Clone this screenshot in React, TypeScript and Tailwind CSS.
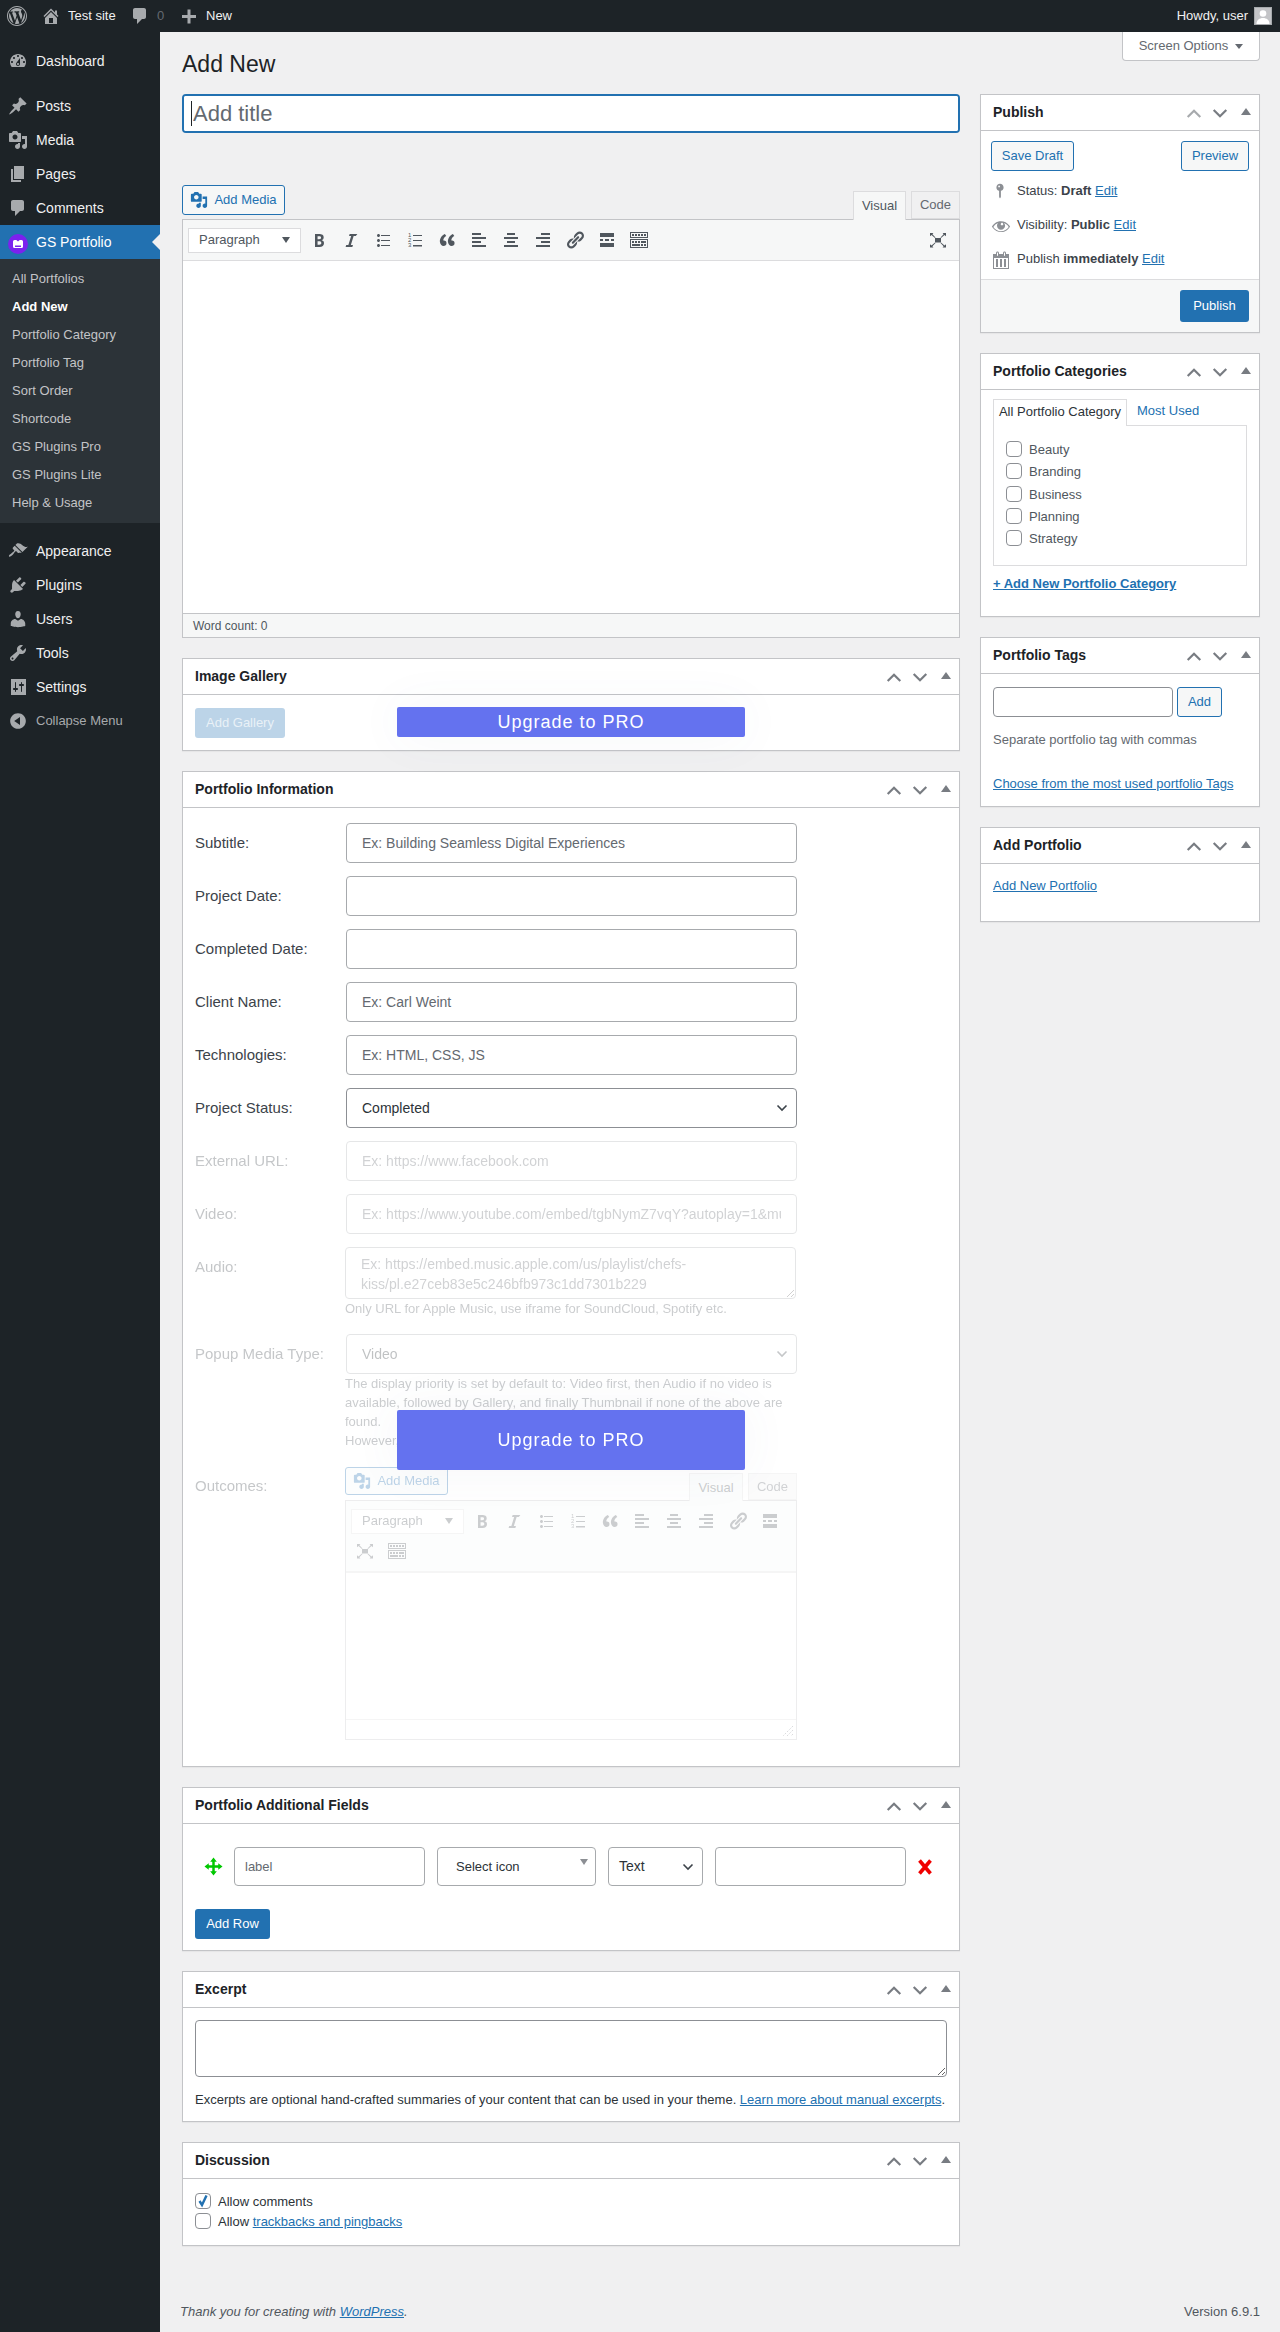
import React from "react";

const P: Record<string, string> = {
  wp: "M20 10c0-5.52-4.48-10-10-10S0 4.48 0 10s4.48 10 10 10 10-4.48 10-10zM10 1.01c4.96 0 8.99 4.03 8.99 8.99s-4.03 8.99-8.99 8.99S1.01 14.96 1.01 10 5.04 1.01 10 1.01zM8.01 14.82L4.96 6.61c.49-.03 1.05-.08 1.05-.08.43-.05.38-1.01-.06-.99 0 0-1.29.1-2.13.1-.15 0-.33 0-.52-.01 1.44-2.17 3.9-3.6 6.7-3.6 2.09 0 3.99.79 5.41 2.09-.6-.08-1.45.35-1.45 1.42 0 .66.38 1.22.79 1.88.31.54.5 1.22.5 2.21 0 1.34-1.27 4.48-1.27 4.48l-2.71-7.5c.48-.03.75-.16.75-.16.43-.05.38-1.1-.05-1.08 0 0-1.3.11-2.14.11-.78 0-2.11-.11-2.11-.11-.43-.02-.48 1.06-.05 1.08l.84.08 1.12 3.04zm6.02 2.15L16.64 10s.67-1.69.39-3.81c.63 1.14.94 2.42.94 3.81 0 2.96-1.56 5.58-3.94 6.97zM2.68 6.77L6.5 17.25c-2.67-1.3-4.47-4.08-4.47-7.25 0-1.16.2-2.23.65-3.23zm7.45 4.53l2.29 6.25c-.75.27-1.57.42-2.42.42-.72 0-1.41-.11-2.06-.3z",
  home: "M16 8.5l1.53 1.53-1.06 1.06L10 4.62l-6.47 6.47-1.06-1.06L10 2.5l4 4v-2h2v4zm-6-2.46l6 5.99V18H4v-5.97zM12 17v-5H8v5h4z",
  plus: "M17 9v3h-5.5v5.5h-3V12H3V9h5.5V3.5h3V9z",
  comment: "M5 2h9c1.1 0 2 .9 2 2v7c0 1.1-.9 2-2 2h-2l-5 5v-5H5c-1.1 0-2-.9-2-2V4c0-1.1.9-2 2-2z",
  dashboard: "M3.76 16h12.48c1.1-1.37 1.76-3.11 1.76-5 0-4.42-3.58-8-8-8s-8 3.58-8 8c0 1.89.66 3.63 1.76 5zM10 4c.55 0 1 .45 1 1s-.45 1-1 1-1-.45-1-1 .45-1 1-1zM6 6c.55 0 1 .45 1 1s-.45 1-1 1-1-.45-1-1 .45-1 1-1zm8 0c.55 0 1 .45 1 1s-.45 1-1 1-1-.45-1-1 .45-1 1-1zm-5.37 5.55L12 7v6c0 1.1-.9 2-2 2s-2-.9-2-2c0-.57.24-1.08.63-1.45zM4 10c.55 0 1 .45 1 1s-.45 1-1 1-1-.45-1-1 .45-1 1-1zm12 0c.55 0 1 .45 1 1s-.45 1-1 1-1-.45-1-1 .45-1 1-1zm-5 3c0-.55-.45-1-1-1s-1 .45-1 1 .45 1 1 1 1-.45 1-1z",
  post: "M10.44 3.02l1.82-1.82 6.36 6.35-1.83 1.82c-1.05-.68-2.48-.57-3.41.36l-.75.75c-.92.93-1.04 2.35-.35 3.41l-1.83 1.82-2.41-2.41-2.8 2.79c-.42.42-3.38 2.71-3.8 2.29s1.86-3.39 2.28-3.81l2.79-2.79L4.1 9.36l1.83-1.82c1.05.69 2.48.57 3.4-.36l.75-.75c.93-.92 1.05-2.35.36-3.41z",
  media: "M13 11V4c0-.55-.45-1-1-1h-1.67L9 1H5L3.67 3H2c-.55 0-1 .45-1 1v7c0 .55.45 1 1 1h10c.55 0 1-.45 1-1zM7 4.5c1.38 0 2.5 1.12 2.5 2.5S8.38 9.5 7 9.5 4.5 8.38 4.5 7 5.62 4.5 7 4.5zM14 6h5v10.5c0 1.38-1.12 2.5-2.5 2.5S14 17.88 14 16.5s1.12-2.5 2.5-2.5c.17 0 .34.02.5.05V9h-3V6zm-4 8.05V13h2v3.5c0 1.38-1.12 2.5-2.5 2.5S7 17.88 7 16.5 8.12 14 9.5 14c.17 0 .34.02.5.05z",
  page: "M6 15V2h10v13H6zm-1 1h8v2H3V5h2v11z",
  appearance: "M14.48 11.06L7.41 3.99l1.5-1.5c.5-.56 2.3-.47 3.51.32 1.21.8 1.43 1.28 2.91 2.1 1.18.64 2.45 1.26 4.45.85zm-.71.71L6.7 4.7 4.93 6.47c-.39.39-.39 1.02 0 1.41l1.06 1.06c.39.39.39 1.03 0 1.42-.6.6-1.43 1.11-2.21 1.69-.35.26-.7.53-1.01.84C1.43 13.23.42 14.84 1.09 15.5c.67.67 2.27-.34 3.61-1.68.31-.31.58-.66.85-1.02.57-.78 1.08-1.61 1.69-2.21.39-.39 1.02-.39 1.41 0l1.06 1.06c.39.39 1.02.39 1.41 0z",
  plugins: "M13.11 4.36L9.87 7.6 8 5.73l3.24-3.24c.35-.34 1.05-.2 1.56.32.52.51.66 1.21.31 1.55zm-8 1.77l.91-1.12 9.01 9.01-1.19.84c-.71.71-2.63 1.16-3.82 1.16H6.14L4.9 17.26c-.59.59-1.54.59-2.12 0-.59-.58-.59-1.53 0-2.12l1.24-1.24v-3.88c0-1.13.4-3.19 1.09-3.89zm7.26 3.97l3.24-3.24c.34-.35 1.04-.21 1.55.31.52.51.66 1.21.31 1.55l-3.24 3.25z",
  users: "M10 9.25c-2.27 0-2.73-3.44-2.73-3.44C7 4.02 7.82 2 9.97 2c2.16 0 2.98 2.02 2.71 3.81 0 0-.41 3.44-2.68 3.44zm0 2.57L12.72 10c2.39 0 4.52 2.33 4.52 4.53v2.49s-3.65 1.13-7.24 1.13c-3.65 0-7.24-1.13-7.24-1.13v-2.49c0-2.25 1.94-4.48 4.47-4.48z",
  tools: "M16.68 9.77c-1.34 1.34-3.3 1.67-4.95.99l-5.41 6.52c-.99.99-2.59.99-3.58 0s-.99-2.59 0-3.57l6.52-5.42c-.68-1.65-.35-3.61.99-4.95 1.28-1.28 3.12-1.62 4.72-1.06l-2.89 2.89 2.82 2.82 2.86-2.87c.53 1.58.18 3.39-1.08 4.65zM3.81 16.21c.4.39 1.04.39 1.43 0 .4-.4.4-1.04 0-1.43-.39-.4-1.03-.4-1.43 0-.39.39-.39 1.03 0 1.43z",
  settings: "M18 18V2H3v16h15zM8 11h1c.55 0 1 .45 1 1s-.45 1-1 1H8v1.5c0 .28-.22.5-.5.5s-.5-.22-.5-.5V13H6c-.55 0-1-.45-1-1s.45-1 1-1h1V5.5c0-.28.22-.5.5-.5s.5.22.5.5V11zm5-2h-1c-.55 0-1-.45-1-1s.45-1 1-1h1V5.5c0-.28.22-.5.5-.5s.5.22.5.5V7h1c.55 0 1 .45 1 1s-.45 1-1 1h-1v5.5c0 .28-.22.5-.5.5s-.5-.22-.5-.5V9z",
  collapse: "M10 2.16c4.33 0 7.84 3.51 7.84 7.84s-3.51 7.84-7.84 7.84S2.16 14.33 2.16 10 5.71 2.16 10 2.16zm2 11.72V6.12L6.18 9.97z",
  bold: "M6 4v13h4.54c1.37 0 2.46-.33 3.26-1 .8-.66 1.2-1.58 1.2-2.77 0-.84-.17-1.51-.51-2.01s-.9-.85-1.67-1.03v-.09c.57-.1 1.02-.4 1.36-.9s.51-1.13.51-1.91c0-1.14-.39-1.98-1.17-2.5C12.75 4.26 11.5 4 9.78 4H6zm2.57 5.15V6.26h1.36c.73 0 1.27.11 1.61.32.34.22.51.58.51 1.07 0 .54-.16.92-.47 1.15s-.82.35-1.51.35h-1.5zm0 2.19h1.6c1.44 0 2.16.53 2.16 1.61 0 .6-.17 1.05-.51 1.34s-.86.43-1.57.43H8.57v-3.38z",
  italic: "M14.78 6h-2.13l-2.8 9h2.12l-.62 2H4.6l.62-2h2.14l2.8-9H8.03l.62-2h7.75z",
  ul: "M5.5 7C4.67 7 4 6.33 4 5.5 4 4.68 4.67 4 5.5 4 6.32 4 7 4.68 7 5.5 7 6.33 6.32 7 5.5 7zM8 5h9v1H8V5zm-2.5 7c-.83 0-1.5-.67-1.5-1.5C4 9.68 4.67 9 5.5 9c.82 0 1.5.68 1.5 1.5 0 .83-.68 1.5-1.5 1.5zM8 10h9v1H8v-1zm-2.5 7c-.83 0-1.5-.67-1.5-1.5 0-.82.67-1.5 1.5-1.5.82 0 1.5.68 1.5 1.5 0 .83-.68 1.5-1.5 1.5zM8 15h9v1H8v-1z",
  quote: "M9.49 13.22c0-.74-.2-1.38-.61-1.9-.62-.78-1.83-.88-2.53-.72-.29-1.65 1.11-3.75 2.92-4.65L7.88 4c-2.73 1.3-5.42 4.28-4.96 8.05C3.21 14.43 4.59 16 6.54 16c.85 0 1.56-.25 2.12-.75s.83-1.18.83-2.03zm8.05 0c0-.74-.2-1.38-.61-1.9-.63-.78-1.83-.88-2.53-.72-.29-1.65 1.11-3.75 2.92-4.65L15.93 4c-2.73 1.3-5.42 4.28-4.96 8.05.29 2.38 1.66 3.95 3.61 3.95.85 0 1.56-.25 2.12-.75s.84-1.18.84-2.03z",
  alignL: "M12 5V3H3v2h9zm5 4V7H3v2h14zm-5 4v-2H3v2h9zm5 4v-2H3v2h14z",
  alignC: "M14 5V3H6v2h8zm3 4V7H3v2h14zm-3 4v-2H6v2h8zm3 4v-2H3v2h14z",
  alignR: "M17 5V3H8v2h9zm0 4V7H3v2h14zm0 4v-2H8v2h9zm0 4v-2H3v2h14z",
  link: "M17.74 2.76c1.68 1.69 1.68 4.41 0 6.1l-1.53 1.52c-1.12 1.12-2.7 1.47-4.14 1.09l2.62-2.61.76-.77.76-.76c.84-.84.84-2.2 0-3.04-.84-.85-2.2-.85-3.04 0l-.77.76-3.38 3.38c-.37-1.44-.02-3.02 1.1-4.14l1.52-1.53c1.69-1.68 4.42-1.68 6.1 0zM8.59 13.43l5.34-5.34c.42-.42.42-1.1 0-1.52-.44-.43-1.13-.39-1.53 0l-5.33 5.34c-.42.42-.42 1.1 0 1.52.44.43 1.13.39 1.52 0zm-.76 2.29l4.14-4.15c.38 1.44.03 3.02-1.09 4.14l-1.52 1.53c-1.69 1.68-4.41 1.68-6.1 0-1.68-1.68-1.68-4.42 0-6.1l1.53-1.52c1.12-1.12 2.7-1.47 4.14-1.1l-4.14 4.15c-.85.84-.85 2.2 0 3.05.84.84 2.2.84 3.04 0z",
  more: "M17 7V3H3v4h14zM6 11V9H3v2h3zm6 0V9H8v2h4zm5 0V9h-3v2h3zm0 6v-4H3v4h14z",
  kitchen: "M19 2v6H1V2h18zm-1 5V3H2v4h16zM5 4v2H3V4h2zm3 0v2H6V4h2zm3 0v2H9V4h2zm3 0v2h-2V4h2zm3 0v2h-2V4h2zm2 5v9H1V9h18zm-1 8v-7H2v7h16zM5 11v2H3v-2h2zm3 0v2H6v-2h2zm3 0v2H9v-2h2zm6 0v2h-5v-2h5zm-6 3v2H3v-2h8zm3 0v2h-2v-2h2zm3 0v2h-2v-2h2z",
  pin: "M14 6c0 1.86-1.28 3.41-3 3.86V16c0 1-1 2-1 2s-1-1-1-2V9.86c-1.72-.45-3-2-3-3.86 0-2.21 1.79-4 4-4s4 1.79 4 4zM8 5c0 .55.45 1 1 1s1-.45 1-1-.45-1-1-1-1 .45-1 1z",
  eye: "M18.3 9.5C15 4.9 8.5 3.8 3.9 7.2c-1.2.9-2.2 2.1-3 3.4.2.4.5.8.8 1.2 3.3 4.6 9.6 5.6 14.2 2.4.9-.7 1.7-1.4 2.4-2.4.3-.4.5-.8.8-1.2-.2-.5-.5-.8-.8-1.1zm-8.2-2.3c.5-.5 1.3-.5 1.8 0s.5 1.3 0 1.8-1.3.5-1.8 0c-.5-.4-.5-1.3 0-1.8zm-.1 8c-3.1 0-6-1.6-7.7-4.2C3.5 9 5.1 7.8 7 7c-.7.8-1 1.7-1 2.7 0 2.2 1.7 4.1 4 4.1 2.2 0 4.1-1.7 4.1-4 0-1-.4-2-1.1-2.7 1.9.8 3.5 2 4.7 3.9-1.7 2.6-4.6 4.2-7.7 4.2z",
  calendar: "M15 4h3v15H2V4h3V3c0-.41.15-.76.44-1.06.29-.29.65-.44 1.06-.44s.77.15 1.06.44c.29.3.44.65.44 1.06v1h4V3c0-.41.15-.76.44-1.06.29-.29.65-.44 1.06-.44s.77.15 1.06.44c.29.3.44.65.44 1.06v1zM6 3v2.5c0 .14.05.26.15.36.09.09.21.14.35.14s.26-.05.35-.14c.1-.1.15-.22.15-.36V3c0-.14-.05-.26-.15-.35-.09-.1-.21-.15-.35-.15s-.26.05-.35.15c-.1.09-.15.21-.15.35zm7 0v2.5c0 .14.05.26.14.36.1.09.22.14.36.14s.26-.05.36-.14c.09-.1.14-.22.14-.36V3c0-.14-.05-.26-.14-.35-.1-.1-.22-.15-.36-.15s-.26.05-.36.15c-.09.09-.14.21-.14.35zm4 15V8H3v10h14zM5 9h2v8H5V9zm4 0h2v8H9V9zm4 0h2v8h-2V9z",
};

function Dash({ n, className = "" }: { n: string; className?: string }) {
  return (
    <svg viewBox="0 0 20 20" fill="currentColor" fillRule="evenodd" className={className}>
      <path d={P[n]} />
    </svg>
  );
}

function OlIcon({ className = "" }: { className?: string }) {
  return (
    <svg viewBox="0 0 20 20" fill="currentColor" className={className}>
      <text x="3" y="7" fontSize="6" fontFamily="Liberation Sans, sans-serif">1</text>
      <text x="3" y="12.2" fontSize="6" fontFamily="Liberation Sans, sans-serif">2</text>
      <text x="3" y="17.4" fontSize="6" fontFamily="Liberation Sans, sans-serif">3</text>
      <path d="M8 5h9v1H8zM8 10h9v1H8zM8 15h9v1.400H8z" />
    </svg>
  );
}

function FullIcon({ className = "" }: { className?: string }) {
  return (
    <svg viewBox="0 0 20 20" fill="currentColor" className={className}>
      <path d="M7 8h6v4.500H7z" />
      <path d="M2 3h3.400L4.400 4.200 7.500 7.500 7 8 3.500 5 2 6.300zM18 3h-3.400l1 1.200-3.100 3.300.5.500 3.500-3L18 6.300zM2 17.500h3.400l-1-1.200 3.100-3.300-.5-.5-3.500 3L2 14.200zM18 17.500h-3.400l1-1.200-3.100-3.300.5-.5 3.500 3 1.500-1.300z" />
    </svg>
  );
}

function Chevron({ up, faded }: { up?: boolean; faded?: boolean }) {
  return (
    <svg viewBox="0 0 20 20" className={"h-5 w-5 " + (faded ? "text-[#a7aaad]" : "text-[#787c82]")} fill="none" stroke="currentColor" strokeWidth="2.200">
      {up ? <path d="M3.700 14 L10 7.700 L16.300 14" /> : <path d="M3.700 7 L10 13.300 L16.300 7" />}
    </svg>
  );
}

function Box({ title, h, children, faded }: { title: string; h: string; children?: React.ReactNode; faded?: boolean }) {
  return (
    <section className={"relative flex flex-col border border-[#c3c4c7] bg-white shadow-[0_1px_1px_rgba(0,0,0,0.04)] " + h}>
      <div className="flex h-[36px] shrink-0 items-center justify-between border-b border-[#c3c4c7] pl-3">
        <h2 className="pb-px text-[14px] font-bold leading-none text-[#1d2327]">{title}</h2>
        <div className="flex items-center">
          <span className="flex w-[26px] justify-center"><Chevron up faded={faded} /></span>
          <span className="flex w-[26px] justify-center"><Chevron /></span>
          <span className="flex w-[26px] justify-center pb-[3px]">
            <span className="h-0 w-0 border-x-[5px] border-b-[7px] border-x-transparent border-b-[#787c82]" />
          </span>
        </div>
      </div>
      {children}
    </section>
  );
}

function WpBtn({ children, className = "" }: { children: React.ReactNode; className?: string }) {
  return (
    <button className={"flex items-center justify-center rounded-[3px] border border-[#2271b1] bg-[#f6f7f7] text-[13px] text-[#2271b1] " + className}>
      {children}
    </button>
  );
}

function Primary({ children, className = "" }: { children: React.ReactNode; className?: string }) {
  return (
    <button className={"flex items-center justify-center rounded-[3px] text-[13px] " + className}>{children}</button>
  );
}

function Upgrade({ className }: { className: string }) {
  return (
    <div className={"absolute z-20 flex w-[348px] items-center justify-center rounded-[2px] bg-[#6472ef] text-[18px] tracking-[1px] text-white shadow-[0_0_50px_rgba(90,100,130,0.06)] " + className}>
      Upgrade to PRO
    </div>
  );
}

const TOOLS = ["bold", "italic", "ul", "ol", "quote", "alignL", "alignC", "alignR", "link", "more"];

function ToolIcon({ n }: { n: string }) {
  return (
    <span className="flex h-[28px] w-[32px] shrink-0 items-center justify-center text-[#50575e]">
      {n === "ol" ? <OlIcon className="h-5 w-5" /> : n === "full" ? <FullIcon className="h-5 w-5" /> : <Dash n={n} className="h-5 w-5" />}
    </span>
  );
}

function ParaSelect() {
  return (
    <div className="mr-[2px] flex h-[25px] w-[113px] shrink-0 items-center justify-between border border-[#dcdcde] bg-white pl-[10px] pr-[10px] text-[13px] text-[#50575e]">
      <span>Paragraph</span>
      <span className="h-0 w-0 border-x-[4px] border-t-[6px] border-x-transparent border-t-[#50575e]" />
    </div>
  );
}

function Field({ label, children }: { label: string; children: React.ReactNode }) {
  return (
    <div className="flex items-start">
      <label className="w-[151px] shrink-0 text-[15px] leading-[40px] text-[#3c434a]">{label}</label>
      {children}
    </div>
  );
}

const fieldCls = "h-[40px] w-[451px] rounded-[4px] border border-[#a7aaad] bg-white px-[15px] text-[14px] text-[#2c3338] outline-none placeholder:text-[#646970]";

function Input({ ph }: { ph?: string }) {
  return <input className={fieldCls} placeholder={ph} />;
}

function SelectBox({ value, tone }: { value: string; tone: string }) {
  return (
    <div className={"flex h-[40px] w-[451px] items-center justify-between rounded-[4px] border bg-white pl-[15px] pr-[8px] text-[14px] text-[#2c3338] " + tone}>
      <span>{value}</span>
      <ChevronSmall />
    </div>
  );
}

function ChevronSmall() {
  return (
    <svg viewBox="0 0 12 8" className="h-[8px] w-[12px] text-[#3c434a]" fill="none" stroke="currentColor" strokeWidth="1.600">
      <path d="M1.500 1.500 L6 6 L10.500 1.500" />
    </svg>
  );
}

function Check({ checked }: { checked?: boolean }) {
  return (
    <span className="relative block h-4 w-4 shrink-0 rounded-[4px] border border-[#8c8f94] bg-white">
      {checked && (
        <svg viewBox="0 0 16 16" className="absolute -left-px -top-px h-4 w-4" fill="none" stroke="#2271b1" strokeWidth="2.400">
          <path d="M4.500 8 L7 12 L11.500 2.500" />
        </svg>
      )}
    </span>
  );
}

function Sidebar() {
  const top = [
    ["dashboard", "Dashboard", "mb-[11px]"],
    ["post", "Posts", ""],
    ["media", "Media", ""],
    ["page", "Pages", ""],
    ["comment", "Comments", ""],
  ];
  const subs = ["All Portfolios", "Add New", "Portfolio Category", "Portfolio Tag", "Sort Order", "Shortcode", "GS Plugins Pro", "GS Plugins Lite", "Help & Usage"];
  const bottom = [
    ["appearance", "Appearance"],
    ["plugins", "Plugins"],
    ["users", "Users"],
    ["tools", "Tools"],
    ["settings", "Settings"],
  ];
  return (
    <nav className="w-[160px] shrink-0 bg-[#1d2327] pt-[12px] text-[14px] text-[#f0f0f1]">
      {top.map(([i, t, c]) => (
        <div key={t} className={"flex h-[34px] items-center " + c}>
          <span className="flex w-[36px] justify-center text-[#a7aaad]"><Dash n={i} className="h-5 w-5" /></span>
          <span>{t}</span>
        </div>
      ))}
      <div className="relative flex h-[34px] items-center bg-[#2271b1] text-white">
        <span className="flex w-[36px] justify-center">
          <svg viewBox="0 0 20 20" className="mt-[4px] h-5 w-5">
            <circle cx="10" cy="10" r="10" fill="#7b22ee" />
            <path d="M5 7.500a1.500 1.500 0 0 1 1.500-1.500h1.800l1.700 1.500L11.700 6h1.800A1.500 1.500 0 0 1 15 7.500v5a1.500 1.500 0 0 1-1.500 1.500h-7A1.500 1.500 0 0 1 5 12.500z" fill="#fff" />
            <path d="M7 11.500h6V13H7z" fill="#7b22ee" />
          </svg>
        </span>
        <span>GS Portfolio</span>
        <span className="absolute right-0 top-[9px] h-0 w-0 border-y-[8px] border-r-[8px] border-y-transparent border-r-[#f0f0f1]" />
      </div>
      <div className="mb-[11px] h-[264px] bg-[#2c3338] pt-[5.500px] text-[13px] text-[#c3c4c7]">
        {subs.map((s) => (
          <div key={s} className={"flex h-[28px] items-center pl-3 " + (s === "Add New" ? "font-bold text-white" : "")}>{s}</div>
        ))}
      </div>
      {bottom.map(([i, t]) => (
        <div key={t} className="flex h-[34px] items-center">
          <span className="flex w-[36px] justify-center text-[#a7aaad]"><Dash n={i} className="h-5 w-5" /></span>
          <span>{t}</span>
        </div>
      ))}
      <div className="flex h-[34px] items-center text-[13px] text-[#a7aaad]">
        <span className="flex w-[36px] justify-center"><Dash n="collapse" className="h-5 w-5" /></span>
        <span>Collapse Menu</span>
      </div>
    </nav>
  );
}

function AdminBar() {
  return (
    <header className="flex h-[32px] shrink-0 items-center justify-between bg-[#1d2327] text-[13px] text-[#f0f0f1]">
      <div className="flex items-center">
        <span className="flex w-[34px] justify-center text-[#a7aaad]"><Dash n="wp" className="h-5 w-5" /></span>
        <span className="flex w-[34px] justify-center text-[#a7aaad]"><Dash n="home" className="h-5 w-5" /></span>
        <span className="w-[58px]">Test site</span>
        <span className="flex w-[28px] justify-center text-[#a7aaad]"><Dash n="comment" className="h-5 w-5" /></span>
        <span className="ml-[3px] w-[15px] text-[#646970]">0</span>
        <span className="flex w-[34px] justify-center text-[#a7aaad]"><Dash n="plus" className="h-5 w-5" /></span>
        <span>New</span>
      </div>
      <div className="flex items-center pr-2">
        <span>Howdy, user</span>
        <span className="ml-[6px] flex h-[18px] w-[18px] items-end justify-center overflow-hidden border border-[#a7aaad] bg-[#c3c4c7]">
          <svg viewBox="0 0 16 16" className="h-4 w-4" fill="#fff"><circle cx="8" cy="5.500" r="3.300" /><path d="M1.500 16c0-4 3-6 6.500-6s6.500 2 6.500 6z" /></svg>
        </span>
      </div>
    </header>
  );
}

function TitleRow() {
  return (
    <div className="relative h-[39px] rounded-[4px] border-2 border-[#2271b1] bg-white">
      <input className="h-full w-full rounded-[2px] bg-white pl-[9px] text-[22px] text-[#2c3338] outline-none placeholder:text-[#646970]" placeholder="Add title" />
      <span className="absolute left-[7px] top-[5px] h-[25px] w-px bg-[#1d2327]" />
    </div>
  );
}

function ClassicEditor() {
  return (
    <div className="mt-[52px]">
      <div className="flex h-[34px] items-start justify-between">
        <WpBtn className="h-[30px] w-[103px] gap-[6px]"><Dash n="media" className="h-[18px] w-[18px]" />Add Media</WpBtn>
        <div className="flex h-full items-end gap-[5px]">
          <span className="relative z-10 -mb-px flex h-[29px] w-[53px] items-center justify-center border border-b-0 border-[#dcdcde] bg-[#f6f7f7] text-[13px] text-[#50575e]">Visual</span>
          <span className="flex h-[28px] w-[49px] items-center justify-center border border-[#dcdcde] bg-[#f0f0f1] text-[13px] text-[#646970]">Code</span>
        </div>
      </div>
      <div className="flex h-[419px] flex-col border border-[#c3c4c7] bg-white">
        <div className="flex h-[41px] shrink-0 items-center justify-between border-b border-[#dcdcde] bg-[#f6f7f7] pl-[5px] pr-[5px]">
          <div className="flex items-center">
            <ParaSelect />
            {TOOLS.map((t) => <ToolIcon key={t} n={t} />)}
            <ToolIcon n="kitchen" />
          </div>
          <ToolIcon n="full" />
        </div>
        <div className="flex-1" />
        <div className="flex h-[24px] shrink-0 items-center border-t border-[#c3c4c7] bg-[#f6f7f7] pl-[10px] text-[12px] text-[#50575e]">Word count: 0</div>
      </div>
    </div>
  );
}

function PortfolioInfo() {
  return (
    <Box title="Portfolio Information" h="h-[996px]">
      <div className="flex flex-col gap-[13px] pl-3 pt-[15px]">
        <Field label="Subtitle:"><Input ph="Ex: Building Seamless Digital Experiences" /></Field>
        <Field label="Project Date:"><Input /></Field>
        <Field label="Completed Date:"><Input /></Field>
        <Field label="Client Name:"><Input ph="Ex: Carl Weint" /></Field>
        <Field label="Technologies:"><Input ph="Ex: HTML, CSS, JS" /></Field>
        <Field label="Project Status:"><SelectBox value="Completed" tone="border-[#8c8f94]" /></Field>
      </div>
      <div className="mt-[13px] flex flex-col pl-3 opacity-30">
        <Field label="External URL:"><Input ph="Ex: https://www.facebook.com" /></Field>
        <div className="h-[13px]" />
        <Field label="Video:"><Input ph="Ex: https://www.youtube.com/embed/tgbNymZ7vqY?autoplay=1&mute=1&rel=0" /></Field>
        <div className="h-[13px]" />
        <Field label="Audio:">
          <div className="-ml-px w-[451px]">
            <textarea className="block h-[52px] w-full rounded-[4px] border border-[#a7aaad] bg-white px-[15px] pt-[6px] text-[14px] leading-[20px] outline-none placeholder:text-[#646970]" placeholder="Ex: https://embed.music.apple.com/us/playlist/chefs-kiss/pl.e27ceb83e5c246bfb973c1dd7301b229" />
            <p className="text-[13px] leading-[20px] text-[#50575e]">Only URL for Apple Music, use iframe for SoundCloud, Spotify etc.</p>
          </div>
        </Field>
        <div className="h-[15px]" />
        <Field label="Popup Media Type:">
          <div className="w-[451px]">
            <SelectBox value="Video" tone="border-[#a7aaad]" />
            <p className="-ml-px text-[13px] leading-[19px] text-[#50575e]">
              The display priority is set by default to: Video first, then Audio if no video is available, followed by Gallery, and finally Thumbnail if none of the above are found.<br />However, you can choose the type here.
            </p>
          </div>
        </Field>
        <div className="h-[17px]" />
        <div className="flex items-start">
          <label className="w-[150px] shrink-0 pt-[9px] text-[15px] leading-[20px] text-[#3c434a]">Outcomes:</label>
          <div className="w-[452px]">
            <div className="flex h-[33px] items-start justify-between">
              <WpBtn className="h-[28px] w-[103px] gap-[6px]"><Dash n="media" className="h-[18px] w-[18px]" />Add Media</WpBtn>
              <div className="flex h-full items-end gap-[5px]">
                <span className="relative z-10 -mb-px flex h-[28px] w-[54px] items-center justify-center border border-b-0 border-[#dcdcde] bg-[#f6f7f7] text-[13px] text-[#50575e]">Visual</span>
                <span className="flex h-[27px] w-[49px] items-center justify-center border border-[#dcdcde] bg-[#f0f0f1] text-[13px] text-[#646970]">Code</span>
              </div>
            </div>
            <div className="flex h-[240px] flex-col border border-[#c3c4c7]">
              <div className="h-[72px] shrink-0 border-b-2 border-[#dcdcde] bg-[#f6f7f7] pl-[5px] pt-[5px]">
                <div className="flex h-[30px] items-center">
                  <ParaSelect />
                  {TOOLS.map((t) => <ToolIcon key={t} n={t} />)}
                </div>
                <div className="-ml-[2px] flex h-[30px] items-center">
                  <ToolIcon n="full" />
                  <ToolIcon n="kitchen" />
                </div>
              </div>
              <div className="flex-1 bg-white" />
              <div className="relative h-[20px] shrink-0 border-t border-[#dcdcde] bg-white">
                <svg viewBox="0 0 12 12" className="absolute bottom-[2px] right-[2px] h-3 w-3 text-[#50575e]" fill="none" stroke="currentColor" strokeDasharray="1 1.500">
                  <path d="M11 1 L1 11 M11 5 L5 11 M11 9 L9 11" />
                </svg>
              </div>
            </div>
          </div>
        </div>
      </div>
      <Upgrade className="left-[214px] top-[638px] h-[60px]" />
    </Box>
  );
}

function AdditionalFields() {
  const cls = "h-[39px] rounded-[4px] border border-[#a7aaad] bg-white text-[13px] text-[#2c3338] outline-none placeholder:text-[#646970]";
  return (
    <Box title="Portfolio Additional Fields" h="h-[164px]">
      <div className="pl-3 pt-[23px]">
        <div className="flex items-center">
          <svg viewBox="0 0 20 20" className="ml-[9px] mr-[11px] h-[19px] w-[19px] text-[#00c800]" fill="currentColor">
            <path d="M10 0.500 L13.500 5 H11.300 V8.700 H15 V6.500 L19.500 10 L15 13.500 V11.300 H11.300 V15 H13.500 L10 19.500 L6.500 15 H8.700 V11.300 H5 V13.500 L0.500 10 L5 6.500 V8.700 H8.700 V5 H6.500 Z" />
          </svg>
          <input className={cls + " w-[191px] pl-[10px]"} placeholder="label" />
          <div className={cls + " relative ml-[12px] flex w-[159px] items-center pl-[18px]"}>
            Select icon
            <span className="absolute right-[7px] top-[11px] h-0 w-0 border-x-[4px] border-t-[6px] border-x-transparent border-t-[#8c8f94]" />
          </div>
          <div className={cls + " ml-[12px] flex w-[95px] items-center justify-between pl-[10px] pr-[8px] text-[14px]"}>
            Text
            <ChevronSmall />
          </div>
          <input className={cls + " ml-[12px] w-[191px]"} />
          <svg viewBox="0 0 16 16" className="ml-[11px] h-4 w-4" fill="none" stroke="#f00000" strokeWidth="3.600">
            <path d="M2.500 1.500 L13.500 14.500 M13.500 1.500 L2.500 14.500" />
          </svg>
        </div>
        <Primary className="mt-[23px] h-[30px] w-[75px] bg-[#2271b1] text-white">Add Row</Primary>
      </div>
    </Box>
  );
}

function Excerpt() {
  return (
    <Box title="Excerpt" h="h-[151px]">
      <div className="px-3 pt-3">
        <textarea className="block h-[57px] w-full rounded-[4px] border border-[#8c8f94] bg-white outline-none" />
        <p className="mt-[14px] text-[13px] leading-[18px] text-[#2c3338]">
          Excerpts are optional hand-crafted summaries of your content that can be used in your theme. <a className="text-[#2271b1] underline">Learn more about manual excerpts</a>.
        </p>
      </div>
    </Box>
  );
}

function Discussion() {
  return (
    <Box title="Discussion" h="h-[104px]">
      <div className="px-3 pt-[14px] text-[13px] text-[#2c3338]">
        <div className="flex h-[20px] items-start gap-[7px]"><Check checked /><span className="leading-[18px]">Allow comments</span></div>
        <div className="flex h-[20px] items-start gap-[7px]"><Check /><span className="leading-[18px]">Allow <a className="text-[#2271b1] underline">trackbacks and pingbacks</a></span></div>
      </div>
    </Box>
  );
}

function PublishBox() {
  const row = "flex h-[34px] items-center text-[13px] text-[#3c434a]";
  return (
    <Box title="Publish" h="h-[239px]" faded>
      <div className="flex justify-between px-[10px] pt-[10px]">
        <WpBtn className="h-[30px] w-[83px]">Save Draft</WpBtn>
        <WpBtn className="h-[30px] w-[68px]">Preview</WpBtn>
      </div>
      <div className="pl-[10px] pt-[3px]">
        <div className={row}>
          <span className="flex w-[26px] justify-start text-[#8c8f94]"><Dash n="pin" className="h-[18px] w-[18px]" /></span>
          <span>Status: <b>Draft</b> <a className="text-[#2271b1] underline">Edit</a></span>
        </div>
        <div className={row}>
          <span className="flex w-[26px] text-[#8c8f94]"><Dash n="eye" className="mt-[2px] h-[20px] w-[20px]" /></span>
          <span>Visibility: <b>Public</b> <a className="text-[#2271b1] underline">Edit</a></span>
        </div>
        <div className={row}>
          <span className="flex w-[26px] text-[#8c8f94]"><Dash n="calendar" className="mt-[1px] h-[20px] w-[20px]" /></span>
          <span>Publish <b>immediately</b> <a className="text-[#2271b1] underline">Edit</a></span>
        </div>
      </div>
      <div className="mt-auto flex h-[53px] justify-end border-t border-[#dcdcde] bg-[#f6f7f7] pr-[10px] pt-[10px]">
        <Primary className="h-[32px] w-[69px] bg-[#2271b1] text-white">Publish</Primary>
      </div>
    </Box>
  );
}

function CategoriesBox() {
  const cats = ["Beauty", "Branding", "Business", "Planning", "Strategy"];
  return (
    <Box title="Portfolio Categories" h="h-[264px]">
      <div className="px-3 pt-[9px] text-[13px]">
        <div className="flex h-[26px] items-start">
          <span className="relative z-10 flex h-[27px] w-[134px] items-center justify-center border border-b-0 border-[#dcdcde] bg-white pb-[3px] text-[#2c3338]">All Portfolio Category</span>
          <span className="ml-[10px] flex h-[27px] items-center pb-[3px] text-[#2271b1]">Most Used</span>
        </div>
        <div className="h-[141px] w-[254px] border border-[#dcdcde] pl-3 pt-[15px]">
          {cats.map((c) => (
            <div key={c} className="flex h-[22.300px] items-start gap-[7px] text-[#50575e]">
              <Check />
              <span className="leading-[18px]">{c}</span>
            </div>
          ))}
        </div>
        <a className="mt-[9px] block font-bold leading-[18px] text-[#2271b1] underline">+ Add New Portfolio Category</a>
      </div>
    </Box>
  );
}

function TagsBox() {
  return (
    <Box title="Portfolio Tags" h="h-[170px]">
      <div className="px-3 pt-[13px] text-[13px]">
        <div className="flex items-center gap-[4px]">
          <input className="h-[30px] w-[180px] rounded-[4px] border border-[#8c8f94] bg-white outline-none" />
          <WpBtn className="h-[30px] w-[45px]">Add</WpBtn>
        </div>
        <p className="mt-[14px] leading-[18px] text-[#646970]">Separate portfolio tag with commas</p>
        <a className="mt-[26px] block leading-[18px] text-[#2271b1] underline">Choose from the most used portfolio Tags</a>
      </div>
    </Box>
  );
}

export default function App() {
  return (
    <div className="flex h-[2332px] flex-col overflow-hidden bg-[#f0f0f1] [font-family:'Liberation_Sans',Arial,sans-serif]">
      <AdminBar />
      <div className="flex flex-1">
        <Sidebar />
        <main className="flex w-[1120px] flex-col pl-[22px] pr-5">
          <div className="flex h-[62px] items-start justify-between">
            <h1 className="pt-[18px] text-[23px] leading-[29px] text-[#1d2327]">Add New</h1>
            <div className="flex h-[29px] w-[138px] items-center justify-center gap-[7px] rounded-b-[4px] border border-t-0 border-[#c3c4c7] bg-white text-[13px] text-[#646970]">
              Screen Options
              <span className="h-0 w-0 border-x-[4px] border-t-[5px] border-x-transparent border-t-[#646970]" />
            </div>
          </div>
          <div className="flex gap-5">
            <div className="flex w-[778px] flex-col">
              <TitleRow />
              <ClassicEditor />
              <div className="mt-5 flex flex-col gap-5">
                <Box title="Image Gallery" h="h-[93px]">
                  <div className="pl-3 pt-[13px]">
                    <Primary className="h-[30px] w-[90px] bg-[#bcd4e8] text-[#e9f1f7]">Add Gallery</Primary>
                  </div>
                  <Upgrade className="left-[214px] top-[48px] h-[30px]" />
                </Box>
                <PortfolioInfo />
                <AdditionalFields />
                <Excerpt />
                <Discussion />
              </div>
            </div>
            <aside className="flex w-[280px] flex-col gap-5">
              <PublishBox />
              <CategoriesBox />
              <TagsBox />
              <Box title="Add Portfolio" h="h-[95px]">
                <a className="block pl-3 pt-[13px] text-[13px] leading-[18px] text-[#2271b1] underline">Add New Portfolio</a>
              </Box>
            </aside>
          </div>
          <footer className="mt-auto flex h-[29px] items-start justify-between text-[13px] leading-[18px] text-[#50575e]">
            <span className="-ml-[2px] italic">Thank you for creating with <a className="text-[#2271b1] underline">WordPress</a>.</span>
            <span>Version 6.9.1</span>
          </footer>
        </main>
      </div>
    </div>
  );
}
